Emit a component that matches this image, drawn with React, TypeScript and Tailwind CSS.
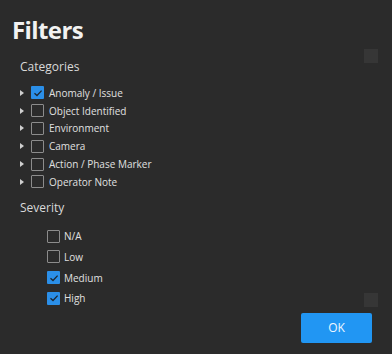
import { useState } from 'react';

const categories = [
  { label: 'Anomaly / Issue', checked: true },
  { label: 'Object Identified', checked: false },
  { label: 'Environment', checked: false },
  { label: 'Camera', checked: false },
  { label: 'Action / Phase Marker', checked: false },
  { label: 'Operator Note', checked: false },
];

const severities = [
  { label: 'N/A', checked: false },
  { label: 'Low', checked: false },
  { label: 'Medium', checked: true },
  { label: 'High', checked: true },
];

function Box({ checked, onClick }: { checked: boolean; onClick: () => void }) {
  return (
    <button
      onClick={onClick}
      className={
        checked
          ? 'w-[13px] h-[13px] flex items-center justify-center bg-[#2b8fe8] rounded-[1px]'
          : 'w-[13px] h-[13px] border border-[#8c8c8c] rounded-[1px]'
      }
    >
      {checked && (
        <svg width="10" height="10" viewBox="0 0 10 10">
          <path d="M1.5 5.2 L4 7.5 L8.6 2.6" stroke="#1d2630" strokeWidth="1.3" fill="none" />
        </svg>
      )}
    </button>
  );
}

export default function App() {
  const [cats, setCats] = useState(categories);
  const [sev, setSev] = useState(severities);

  return (
    <div
      className="w-[392px] h-[354px] bg-[#2b2b2b] text-[#e6e6e6] relative overflow-hidden"
      style={{ fontFamily: '"Open Sans", "Noto Sans", sans-serif' }}
    >
      <div className="pl-[12px] pt-[13px]">
        <h1 className="text-[24px] font-bold leading-[34px] text-[#f2f2f2] tracking-[-0.6px]">Filters</h1>
      </div>

      <div className="pl-[20px] pt-[12px]">
        <div className="text-[12px] leading-[16px] text-[#d9d9d9]">Categories</div>
        <div className="flex flex-col pt-[9px]">
          {cats.map((c, i) => (
            <div key={c.label} className="flex items-center h-[17.8px]">
              <svg width="4" height="6" viewBox="0 0 4 6" className="mr-[7px]">
                <path d="M0 0 L4 3 L0 6 Z" fill="#d0d0d0" />
              </svg>
              <Box
                checked={c.checked}
                onClick={() => setCats(cats.map((x, j) => (j === i ? { ...x, checked: !x.checked } : x)))}
              />
              <span className="ml-[5px] text-[10px] leading-[14px] text-[#e0e0e0]">{c.label}</span>
            </div>
          ))}
        </div>

        <div className="text-[12px] leading-[16px] text-[#d9d9d9] pt-[9px]">Severity</div>
        <div className="flex flex-col pl-[27px] pt-[10px]">
          {sev.map((s, i) => (
            <div key={s.label} className="flex items-center h-[20.7px]">
              <Box
                checked={s.checked}
                onClick={() => setSev(sev.map((x, j) => (j === i ? { ...x, checked: !x.checked } : x)))}
              />
              <span className="ml-[4px] text-[10px] leading-[14px] text-[#e0e0e0]">{s.label}</span>
            </div>
          ))}
        </div>
      </div>

      {/* scroll buttons */}
      <div className="absolute left-[364px] top-[49px] w-[14px] h-[14px] bg-[#363636]" />
      <div className="absolute left-[364px] top-[293px] w-[14px] h-[14px] bg-[#363636]" />

      <button className="absolute left-[301px] top-[313px] w-[71px] h-[30px] bg-[#2196f3] rounded-[2px] text-[12px] text-[#eef6ff]">
        OK
      </button>
    </div>
  );
}
